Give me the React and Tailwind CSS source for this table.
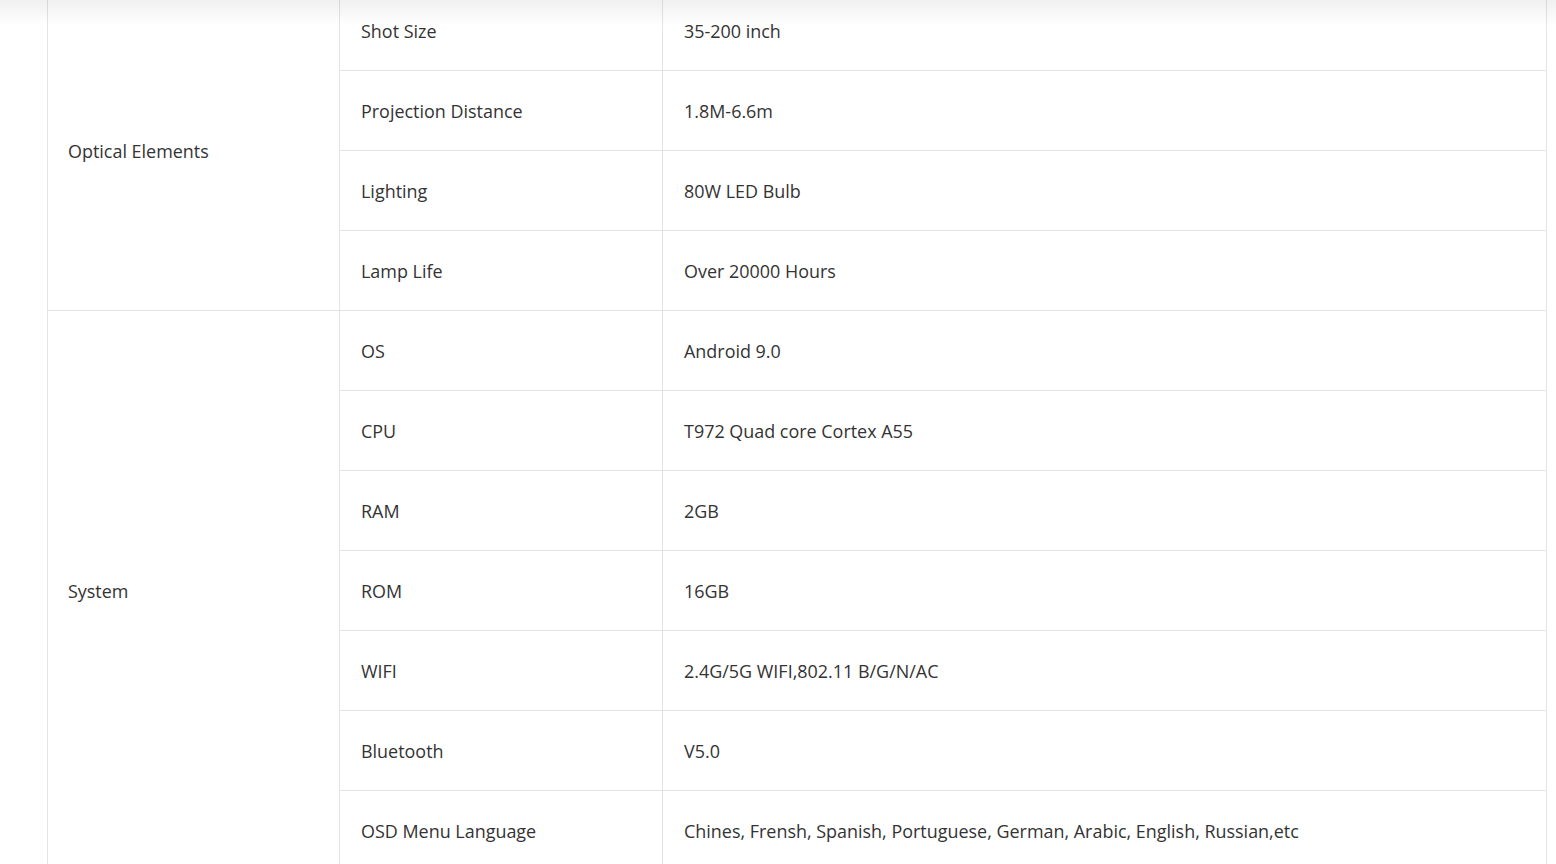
export default function App() {
  const groups = [
    {
      name: "Optical Elements",
      rows: [
        ["Shot Size", "35-200 inch"],
        ["Projection Distance", "1.8M-6.6m"],
        ["Lighting", "80W LED Bulb"],
        ["Lamp Life", "Over 20000 Hours"],
      ],
    },
    {
      name: "System",
      rows: [
        ["OS", "Android 9.0"],
        ["CPU", "T972 Quad core Cortex A55"],
        ["RAM", "2GB"],
        ["ROM", "16GB"],
        ["WIFI", "2.4G/5G WIFI,802.11 B/G/N/AC"],
        ["Bluetooth", "V5.0"],
        ["OSD Menu Language", "Chines, Frensh, Spanish, Portuguese, German, Arabic, English, Russian,etc"],
      ],
    },
  ];

  return (
    <div
      className="relative h-[864px] overflow-hidden bg-white text-[#333] text-[17.94px]"
      style={{ fontFamily: '"Open Sans", "Noto Sans", sans-serif' }}
    >
      {/* header shadow */}
      <div className="pointer-events-none absolute left-0 right-0 top-0 h-[26px] bg-gradient-to-b from-[rgba(0,0,0,0.06)] to-transparent" />

      <div className="-mt-[10px] pl-[47px]">
        <table className="w-[1500px] border-collapse">
          <colgroup>
            <col className="w-[292px]" />
            <col className="w-[323px]" />
            <col />
          </colgroup>
          <tbody>
            {groups.map((g) =>
              g.rows.map((r, i) => (
                <tr key={g.name + r[0]} className="h-[80px]">
                  {i === 0 && (
                    <td
                      rowSpan={g.rows.length}
                      className="border border-[#e4e4e4] pl-[20px] pt-[2px] align-middle"
                    >
                      {g.name}
                    </td>
                  )}
                  <td className="border border-[#e4e4e4] pl-[21px] pt-[2px] align-middle">{r[0]}</td>
                  <td className="border border-[#e4e4e4] pl-[21px] pt-[2px] align-middle">{r[1]}</td>
                </tr>
              ))
            )}
          </tbody>
        </table>
      </div>
    </div>
  );
}
